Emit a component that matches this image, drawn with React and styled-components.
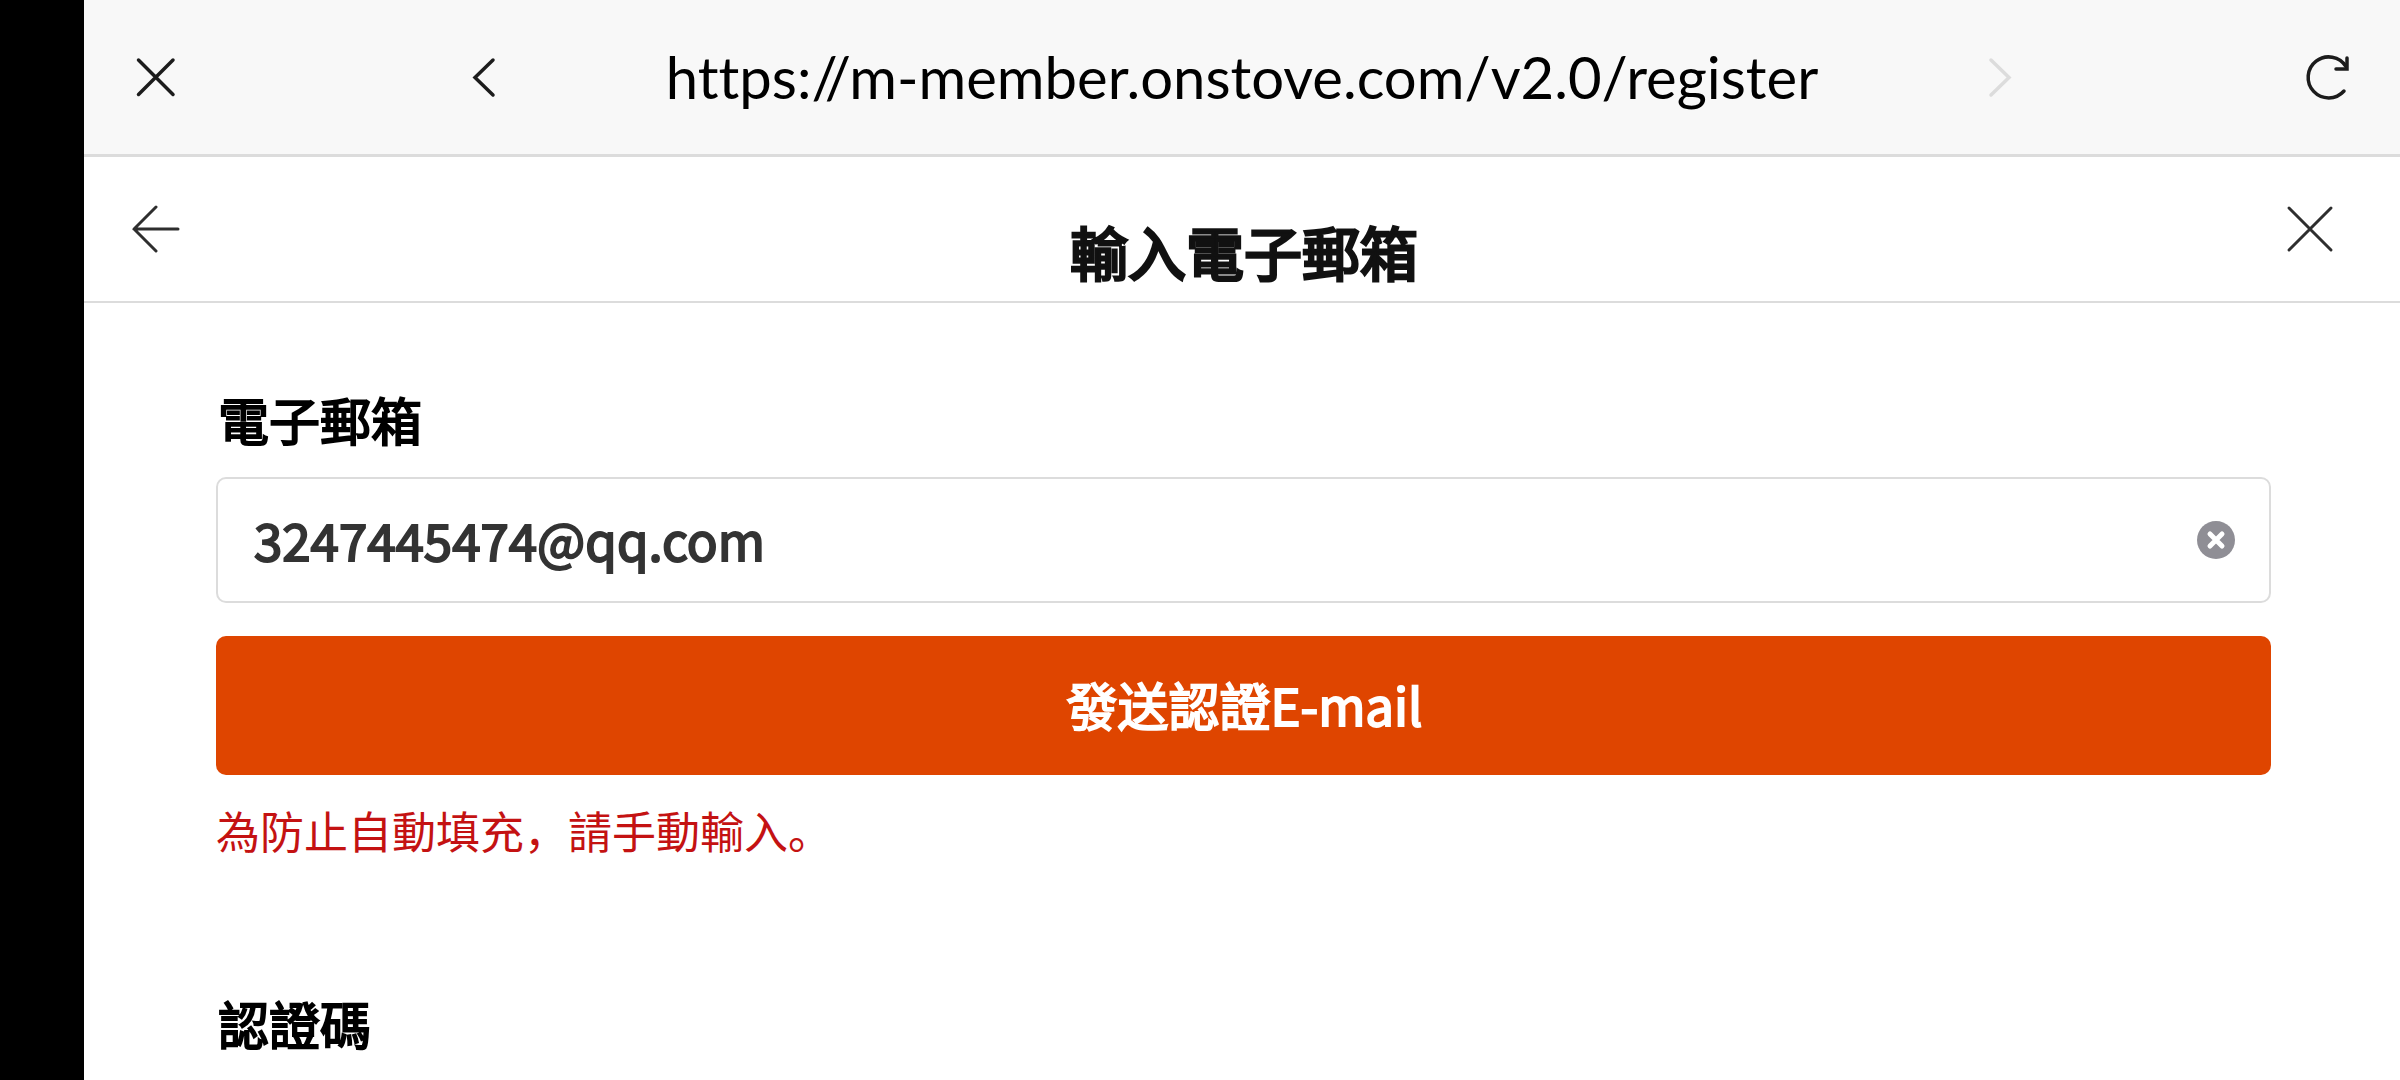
import React, { useState } from 'react'
import styled, { createGlobalStyle } from 'styled-components'

const URL = 'https://m-member.onstove.com/v2.0/register'

const CloseIcon = () => (
  <svg width="44" height="44" viewBox="0 0 44 44">
    <path d="M4.500 5L39 39.500M39 5L4.500 39.500" />
  </svg>
)

const PrevIcon = () => (
  <svg width="44" height="44" viewBox="0 0 44 44">
    <path d="M31 5L13 22.500L31 40" />
  </svg>
)

const NextIcon = () => (
  <svg width="44" height="44" viewBox="0 0 44 44">
    <path d="M13 5L31 22.500L13 40" />
  </svg>
)

const ReloadIcon = () => (
  <svg width="48" height="48" viewBox="0 0 48 48">
    <path d="M40 38A20.500 20.500 0 1 1 42 13.500" />
    <path d="M43 5V16H32" strokeLinejoin="miter" />
  </svg>
)

const ArrowIcon = () => (
  <svg width="48" height="48" viewBox="0 0 48 48">
    <path d="M24 2L2 24L24 46M2 24H46" />
  </svg>
)

const ExitIcon = () => (
  <svg width="48" height="48" viewBox="0 0 48 48">
    <path d="M3 3L45 45M45 3L3 45" />
  </svg>
)

const ClearIcon = () => (
  <svg width="38" height="38" viewBox="0 0 38 38">
    <circle cx="19" cy="19" r="19" fill="#8f8e95" />
    <path
      d="M13 13L25 25M25 13L13 25"
      stroke="#fff"
      strokeWidth="5"
      strokeLinecap="round"
    />
  </svg>
)

const App = () => {
  const [email, setEmail] = useState('3247445474@qq.com')

  return (
    <>
      <GlobalStyle />
      <Screen>
        <BrowserBar>
          <IconButton aria-label="close" $weight={3.5}>
            <CloseIcon />
          </IconButton>
          <Navigation>
            <IconButton aria-label="back" $weight={3.5}>
              <PrevIcon />
            </IconButton>
            <Address>{URL}</Address>
            <IconButton
              aria-label="forward"
              $color="#dcdcdc"
              $weight={3.5}
              disabled
            >
              <NextIcon />
            </IconButton>
          </Navigation>
          <IconButton aria-label="reload" $weight={3.5}>
            <ReloadIcon />
          </IconButton>
        </BrowserBar>
        <Header>
          <IconButton aria-label="previous step" $color="#2e2e2e">
            <ArrowIcon />
          </IconButton>
          <Title>輸入電子郵箱</Title>
          <IconButton aria-label="exit" $color="#2e2e2e">
            <ExitIcon />
          </IconButton>
        </Header>
        <Form onSubmit={(e) => e.preventDefault()}>
          <Label htmlFor="email">電子郵箱</Label>
          <Field>
            <Input
              id="email"
              type="text"
              value={email}
              onChange={(e) => setEmail(e.target.value)}
            />
            <ClearButton
              type="button"
              aria-label="clear"
              onClick={() => setEmail('')}
            >
              <ClearIcon />
            </ClearButton>
          </Field>
          <SubmitButton type="submit">發送認證E-mail</SubmitButton>
          <ErrorText>為防止自動填充，請手動輸入。</ErrorText>
          <SectionTitle>認證碼</SectionTitle>
        </Form>
      </Screen>
    </>
  )
}

export default App

const GlobalStyle = createGlobalStyle`
  * {
    box-sizing: border-box;
  }

  body {
    margin: 0;
    background: #fff;
    font-family: 'Noto Sans CJK SC', sans-serif;
  }

  button,
  input {
    margin: 0;
    padding: 0;
    border: none;
    background: none;
    font-family: inherit;
  }
`

const Screen = styled.div`
  min-height: 100vh;
  border-left: 84px solid #000;
`

const BrowserBar = styled.div`
  display: grid;
  grid-template-columns: 144px 1fr 144px;
  height: 157px;
  background: #f8f8f8;
  border-bottom: 3px solid #dcdcdc;
`

const Navigation = styled.nav`
  display: flex;
  align-items: stretch;
  justify-content: space-between;
  padding: 0 184px;
`

const IconButton = styled.button`
  display: flex;
  align-items: center;
  justify-content: center;
  width: 144px;
  cursor: pointer;

  svg {
    fill: none;
    stroke: ${(props) => props.$color || '#1c1c1c'};
    stroke-width: ${(props) => props.$weight || 3};
    stroke-linecap: round;
  }
`

const Address = styled.span`
  align-self: center;
  font-family: Lato, sans-serif;
  font-size: 58px;
  font-variant-ligatures: none;
  line-height: 80px;
  white-space: nowrap;
`

const Header = styled.header`
  display: grid;
  grid-template-columns: 144px 1fr 144px;
  height: 146px;
  padding-right: 18px;
  border-bottom: 2px solid #dcdcdc;
`

const Title = styled.h1`
  align-self: end;
  margin: 0 0 10px;
  padding-left: 22px;
  color: #111;
  font-size: 58px;
  font-weight: 400;
  line-height: 80px;
  text-align: center;
  -webkit-text-stroke: 3px;
`

const Form = styled.form`
  display: flex;
  flex-direction: column;
  padding: 86px 129px 0 132px;
`

const Label = styled.label`
  margin-bottom: 28px;
  padding-left: 2px;
  font-size: 51px;
  line-height: 60px;
  -webkit-text-stroke: 2px;
`

const SectionTitle = styled.h2`
  margin: 0;
  padding-left: 2px;
  font-size: 51px;
  font-weight: 400;
  line-height: 60px;
  -webkit-text-stroke: 2px;
`

const Field = styled.div`
  display: flex;
  align-items: center;
  height: 126px;
  margin-bottom: 33px;
  padding: 0 34px;
  border: 2px solid #dcdcdc;
  border-radius: 10px;
`

const Input = styled.input`
  flex: 1;
  height: 80px;
  padding: 0 2px 2px;
  color: #333;
  font-size: 51px;
  outline: none;
  -webkit-text-stroke: 2px;
`

const ClearButton = styled.button`
  display: flex;
  cursor: pointer;
`

const SubmitButton = styled.button`
  height: 139px;
  margin-bottom: 25px;
  padding: 0 0 4px 2px;
  border-radius: 10px;
  background: #df4500;
  color: #fff;
  font-size: 51px;
  cursor: pointer;
  -webkit-text-stroke: 2px;
`

const ErrorText = styled.p`
  margin: 0 0 133px;
  color: #c41212;
  font-size: 44px;
  line-height: 60px;
`
